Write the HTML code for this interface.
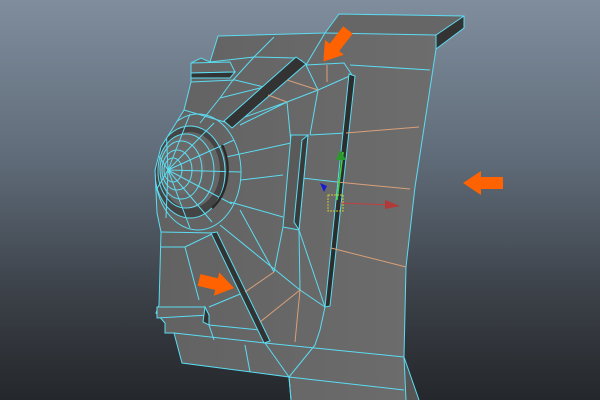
<!DOCTYPE html>
<html><head><meta charset="utf-8"><style>
html,body{margin:0;padding:0;width:600px;height:400px;overflow:hidden}
body{background:linear-gradient(180deg,#7f8d9d 0%,#5f6b78 40%,#3a3f46 75%,#24272b 100%)}
svg{display:block}
</style></head><body>
<svg width="600" height="400" viewBox="0 0 600 400" xmlns="http://www.w3.org/2000/svg">
<defs>
<linearGradient id="f" x1="0" y1="0" x2="1" y2="0">
<stop offset="0" stop-color="#626262"/><stop offset="1" stop-color="#6e6e6e"/>
</linearGradient>
<clipPath id="bc"><polygon points="218,36 325,33 339,14 464,16 464,28 436,49 415,187 406,267 404,357 406,400 291,400 289,377 182,363 174,333 165,333 165,323 156,313 159,305 161,232 157,213 155,170 161,147 176,123 184,110 191,82 191,63 201,58 210,62"/></clipPath>
</defs>
<polygon fill="url(#f)" points="218,36 325,33 339,14 464,16 464,28 436,49 415,187 406,267 404,357 406,400 291,400 289,377 182,363 174,333 165,333 165,323 156,313 159,305 161,232 157,213 155,170 161,147 176,123 184,110 191,82 191,63 201,58 210,62"/>
<polygon fill="#666" points="339,14 464,16 436,35 325,33"/>
<polygon fill="#333" points="464,16 464,28 436,49 436,35"/>
<polygon fill="#555" points="404,357 419,400 406,400"/>
<g clip-path="url(#bc)">
<ellipse cx="190" cy="172" rx="35" ry="46" fill="#444"/>
<ellipse cx="190" cy="170" rx="30" ry="38" fill="#656565"/>
<ellipse cx="182" cy="166" rx="23" ry="28" fill="#6a6a6a"/>
</g>
<g fill="none" stroke="#5cdcf2" stroke-width="1">
<polyline points="218,36 325,33 339,14 464,16 464,28 436,49 415,187 406,267 404,357 406,400"/>
<polyline points="325,33 436,35 464,16"/>
<line x1="436" y1="35" x2="436" y2="49"/>
<polyline points="404,357 419,400"/>
<polyline points="291,400 289,377 182,363 174,333 165,333 165,323 156,313 159,305 161,232 157,213 155,170 161,147 176,123 184,110 191,82 191,63 201,58 210,62 218,36"/>
<line x1="274" y1="37" x2="254" y2="57"/>
<line x1="254" y1="57" x2="233" y2="80"/>
<line x1="325" y1="33" x2="306" y2="65"/>
<polyline points="306,65 344,63 352,75"/>
<line x1="350" y1="65" x2="430" y2="70"/>
<polyline points="235,80 264,87 302,60"/>
<polyline points="191,82 235,80"/>
<polyline points="210,62 254,57 296,58"/>
<line x1="184" y1="110" x2="228" y2="123"/>
<line x1="220" y1="98" x2="264" y2="87"/>
<line x1="200" y1="123" x2="220" y2="98"/>
<line x1="233" y1="80" x2="220" y2="98"/>
<line x1="264" y1="87" x2="268" y2="95"/>
<line x1="287" y1="102" x2="318" y2="90"/>
<line x1="318" y1="90" x2="352" y2="75"/>
<line x1="318" y1="90" x2="306" y2="65"/>
<line x1="287" y1="102" x2="291" y2="143"/>
<line x1="318" y1="90" x2="310" y2="135"/>
<line x1="228" y1="123" x2="287" y2="102"/>
<line x1="240" y1="125" x2="287" y2="102"/>
<line x1="226" y1="157" x2="291" y2="143"/>
<line x1="241" y1="180" x2="283" y2="175"/>
<line x1="302" y1="178" x2="337" y2="182"/>
<line x1="310" y1="135" x2="346" y2="133"/>
<line x1="230" y1="202" x2="283" y2="217"/>
<line x1="240" y1="210" x2="274" y2="272"/>
<line x1="220" y1="225" x2="300" y2="290"/>
<line x1="299" y1="230" x2="325" y2="307"/>
<line x1="299" y1="230" x2="300" y2="290"/>
<line x1="283" y1="227" x2="274" y2="272"/>
<line x1="161" y1="232" x2="214" y2="233"/>
<line x1="161" y1="247" x2="185" y2="247"/>
<line x1="185" y1="247" x2="214" y2="233"/>
<line x1="185" y1="247" x2="199" y2="300"/>
<line x1="209" y1="307" x2="245" y2="292"/>
<line x1="209" y1="325" x2="260" y2="330"/>
<line x1="174" y1="333" x2="265" y2="343"/>
<line x1="245" y1="345" x2="250" y2="372"/>
<line x1="265" y1="343" x2="289" y2="377"/>
<line x1="265" y1="343" x2="404" y2="357"/>
<line x1="289" y1="377" x2="404" y2="390"/>
<polyline points="325,307 320,330 315,345 289,377"/>
<line x1="289" y1="377" x2="291" y2="400"/>
<line x1="209" y1="325" x2="214" y2="340"/>
<line x1="300" y1="290" x2="325" y2="307"/>
</g>
<g fill="none" stroke="#5cdcf2" stroke-width="1" clip-path="url(#bc)">
<ellipse cx="198" cy="172" rx="43" ry="58"/>
<ellipse cx="190" cy="172" rx="35" ry="46"/>
<ellipse cx="186" cy="171" rx="28" ry="37"/>
<ellipse cx="181" cy="170" rx="21" ry="29"/>
<ellipse cx="177" cy="170" rx="15" ry="20"/>
<ellipse cx="173" cy="170" rx="9" ry="12"/>
<line x1="168" y1="170" x2="241" y2="172"/>
<line x1="168" y1="170" x2="234" y2="140"/>
<line x1="168" y1="170" x2="232" y2="204"/>
<line x1="168" y1="170" x2="214" y2="123"/>
<line x1="168" y1="170" x2="212" y2="222"/>
<line x1="168" y1="170" x2="190" y2="114"/>
<line x1="168" y1="170" x2="190" y2="228"/>
<line x1="168" y1="170" x2="166" y2="125"/>
<line x1="168" y1="170" x2="166" y2="218"/>
<line x1="168" y1="170" x2="155" y2="150"/>
<line x1="168" y1="170" x2="155" y2="192"/>
</g>
<path d="M222,145 A35,46 0 0 1 212,208" fill="none" stroke="#2a2a2a" stroke-width="2.5"/>
<polygon fill="#333" stroke="#5cdcf2" stroke-width="1" points="296,57 306,64 232,128 224,121"/>
<polygon fill="#2d2d2d" stroke="#5cdcf2" stroke-width="1" points="349,74 355,76 330,306 325,307"/>
<polygon fill="#333" stroke="#5cdcf2" stroke-width="1" points="211,233 217,232 270,341 264,343"/>
<polygon fill="#5a5a5a" stroke="#5cdcf2" stroke-width="1" points="291,135 308,135 299,230 283,227"/>
<polygon fill="#3a3a3a" stroke="#5cdcf2" stroke-width="1" points="302,140 308,135 299,230 294,222"/>
<polygon fill="#666" stroke="#5cdcf2" stroke-width="1" points="191,63 230,62 235,72 191,73"/>
<polygon fill="#333" stroke="#5cdcf2" stroke-width="1" points="191,73 235,72 230,78 191,78"/>
<polygon fill="#666" stroke="#5cdcf2" stroke-width="1" points="157,307 205,307 209,315 157,318"/>
<polygon fill="#333" stroke="#5cdcf2" stroke-width="1" points="205,307 209,315 209,325 203,322"/>
<g stroke="#d9a07a" stroke-width="1">
<line x1="327" y1="65" x2="327" y2="82"/>
<line x1="287" y1="80" x2="318" y2="90"/>
<line x1="268" y1="95" x2="287" y2="102"/>
<line x1="346" y1="133" x2="419" y2="127"/>
<line x1="337" y1="182" x2="410" y2="189"/>
<line x1="331" y1="248" x2="406" y2="267"/>
<line x1="245" y1="292" x2="274" y2="272"/>
<line x1="260" y1="322" x2="300" y2="290"/>
<line x1="300" y1="290" x2="295" y2="342"/>
</g>
<line x1="337" y1="200" x2="343" y2="152" stroke="#3fd43f" stroke-width="1.5"/>
<polygon fill="#2a9a2a" points="340,150 346,160 336,160"/>
<polygon fill="#1a1ad0" points="320,183 327,186 324,192"/>
<line x1="340" y1="203" x2="390" y2="205" stroke="#c04040" stroke-width="1"/>
<polygon fill="#b03a3a" points="385,200 400,206 385,209"/>
<rect x="328" y="195" width="15" height="16" fill="none" stroke="#cccc30" stroke-width="1" stroke-dasharray="2,1"/>
<g fill="#ff6200">
<polygon transform="translate(348,30) rotate(128)" points="0,-6 22,-6 22,-12 40,0 22,12 22,6 0,6"/>
<polygon transform="translate(503,183) rotate(180)" points="0,-6 22,-6 22,-12 40,0 22,12 22,6 0,6"/>
<polygon transform="translate(199,280) rotate(13)" points="0,-6 18,-6 18,-12 36,0 18,12 18,6 0,6"/>
</g>
</svg>
</body></html>
